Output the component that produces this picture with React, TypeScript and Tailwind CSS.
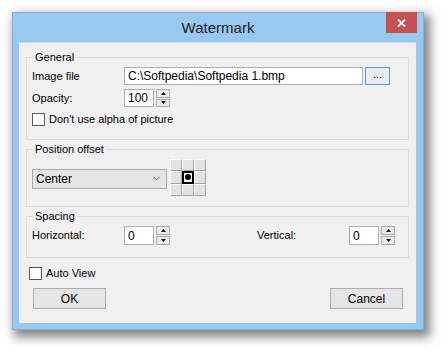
import { ChevronDown } from 'lucide-react'

const font = "font-['Liberation_Sans',Arial,sans-serif]"

function Group({ title, children, className = '' }: { title: string; children: React.ReactNode; className?: string }) {
    return (
        <div className={`mx-[7px] border border-[#dcdcdc] pl-[5px] ${className}`}>
            <span className="-mt-[7px] ml-[1px] block w-fit bg-[#f0f0f0] px-[2px] text-[11px] leading-[13px] text-black">
                {title}
            </span>
            {children}
        </div>
    )
}

function Arrow({ up }: { up?: boolean }) {
    return (
        <svg width="5" height="3" viewBox="0 0 5 3">
            <path d={up ? 'M0 3 L2.5 0 L5 3 Z' : 'M0 0 L2.5 3 L5 0 Z'} fill="#111" />
        </svg>
    )
}

function Spin({ value, height = 18 }: { value: string; height?: number }) {
    return (
        <div className="flex items-start gap-[2px]" style={{ height }}>
            <div className="flex h-full w-[30px] items-center border border-[#abadb3] bg-white pl-[3px] text-[12px] text-black">
                {value}
            </div>
            <div className="flex h-full w-[14px] flex-col gap-[1px]">
                <div className="flex flex-1 items-center justify-center border border-[#acacac] bg-[#e9e9e9]">
                    <Arrow up />
                </div>
                <div className="flex flex-1 items-center justify-center border border-[#acacac] bg-[#e9e9e9]">
                    <Arrow />
                </div>
            </div>
        </div>
    )
}

function Check({ label }: { label: string }) {
    return (
        <div className="flex items-center gap-[4px]">
            <div className="h-[13px] w-[13px] border border-[#5a5a5a] bg-white" />
            <span className="text-[11px] leading-[13px] text-black">{label}</span>
        </div>
    )
}

function PosGrid() {
    const cells = [0, 1, 2, 3, 4, 5, 6, 7, 8]
    return (
        <div className="grid h-[37px] w-[36px] grid-cols-3 grid-rows-3">
            {cells.map((c) =>
                c === 4 ? (
                    <div key={c} className="flex items-center justify-center border-2 border-black bg-[#f4f4f4]">
                        <div className="h-[6px] w-[6px] rounded-full bg-black" />
                    </div>
                ) : (
                    <div
                        key={c}
                        className="border border-b-[#a3a3a3] border-l-white border-r-[#a3a3a3] border-t-white bg-[#e3e3e3]"
                    />
                )
            )}
        </div>
    )
}

function Button({ label }: { label: string }) {
    return (
        <div className="flex h-[21px] w-[73px] items-center justify-center border border-[#adadad] bg-[#e5e5e5] text-[12px] text-black">
            {label}
        </div>
    )
}

export default function App() {
    return (
        <div className={`h-[351px] w-[444px] bg-white pl-[12px] pt-[12px] ${font}`}>
            {/* Window */}
            <div className="flex h-[318px] w-[412px] flex-col border border-[#84aedb] bg-[#99c9ef] shadow-[4px_5px_10px_2px_rgba(0,0,0,0.5)]">
                {/* Title bar */}
                <div className="relative flex h-[29px] items-center justify-center">
                    <span className="pt-[1px] text-[15px] text-[#1b1b1b]">Watermark</span>
                    <div className="absolute right-[6px] top-[-1px] flex h-[21px] w-[31px] items-center justify-center bg-[#c75050]">
                        <svg width="9" height="8" viewBox="0 0 9 8">
                            <path d="M1 0.5 L8 7.5 M8 0.5 L1 7.5" stroke="white" strokeWidth="1.8" />
                        </svg>
                    </div>
                </div>

                {/* Client area */}
                <div className="mb-[6px] ml-[6px] mr-[7px] flex flex-1 flex-col border-t border-[#c5daee] bg-[#f0f0f0]">
                    <Group title="General" className="mt-[14px] pb-[13px]">
                        <div className="mt-[3px] flex h-[18px] items-center">
                            <span className="w-[92px] text-[11px] text-black">Image file</span>
                            <div className="flex h-full w-[239px] items-center border border-[#abadb3] bg-white pl-[3px] text-[12px] text-black">
                                C:\Softpedia\Softpedia 1.bmp
                            </div>
                            <div className="ml-[2px] flex h-full w-[25px] items-center justify-center border border-[#4c9be6] bg-[#ececec] pb-[4px] text-[11px] text-black">
                                ...
                            </div>
                        </div>
                        <div className="mt-[4px] flex items-center">
                            <span className="w-[92px] text-[11px] text-black">Opacity:</span>
                            <Spin value="100" />
                        </div>
                        <div className="mt-[6px]">
                            <Check label="Don't use alpha of picture" />
                        </div>
                    </Group>

                    <Group title="Position offset" className="mt-[9px] pb-[10px]">
                        <div className="mt-[3px] flex items-center gap-[3px]">
                            <div className="mt-[2px] flex h-[20px] w-[135px] items-center justify-between border border-[#acacac] bg-[#e5e5e5] pl-[3px] pr-[4px] text-[12px] text-black">
                                <span>Center</span>
                                <ChevronDown size={11} strokeWidth={2} color="#555" />
                            </div>
                            <PosGrid />
                        </div>
                    </Group>

                    <Group title="Spacing" className="mt-[9px] pb-[12px]">
                        <div className="mt-[3px] grid grid-cols-[225px_1fr]">
                            <div className="flex items-center">
                                <span className="w-[92px] text-[11px] text-black">Horizontal:</span>
                                <Spin value="0" height={19} />
                            </div>
                            <div className="flex items-center">
                                <span className="w-[92px] text-[11px] text-black">Vertical:</span>
                                <Spin value="0" height={19} />
                            </div>
                        </div>
                    </Group>

                    <div className="ml-[10px] mt-[9px]">
                        <Check label="Auto View" />
                    </div>

                    <div className="ml-[14px] mr-[13px] mt-[8px] flex justify-between">
                        <Button label="OK" />
                        <Button label="Cancel" />
                    </div>
                </div>
            </div>
        </div>
    )
}
